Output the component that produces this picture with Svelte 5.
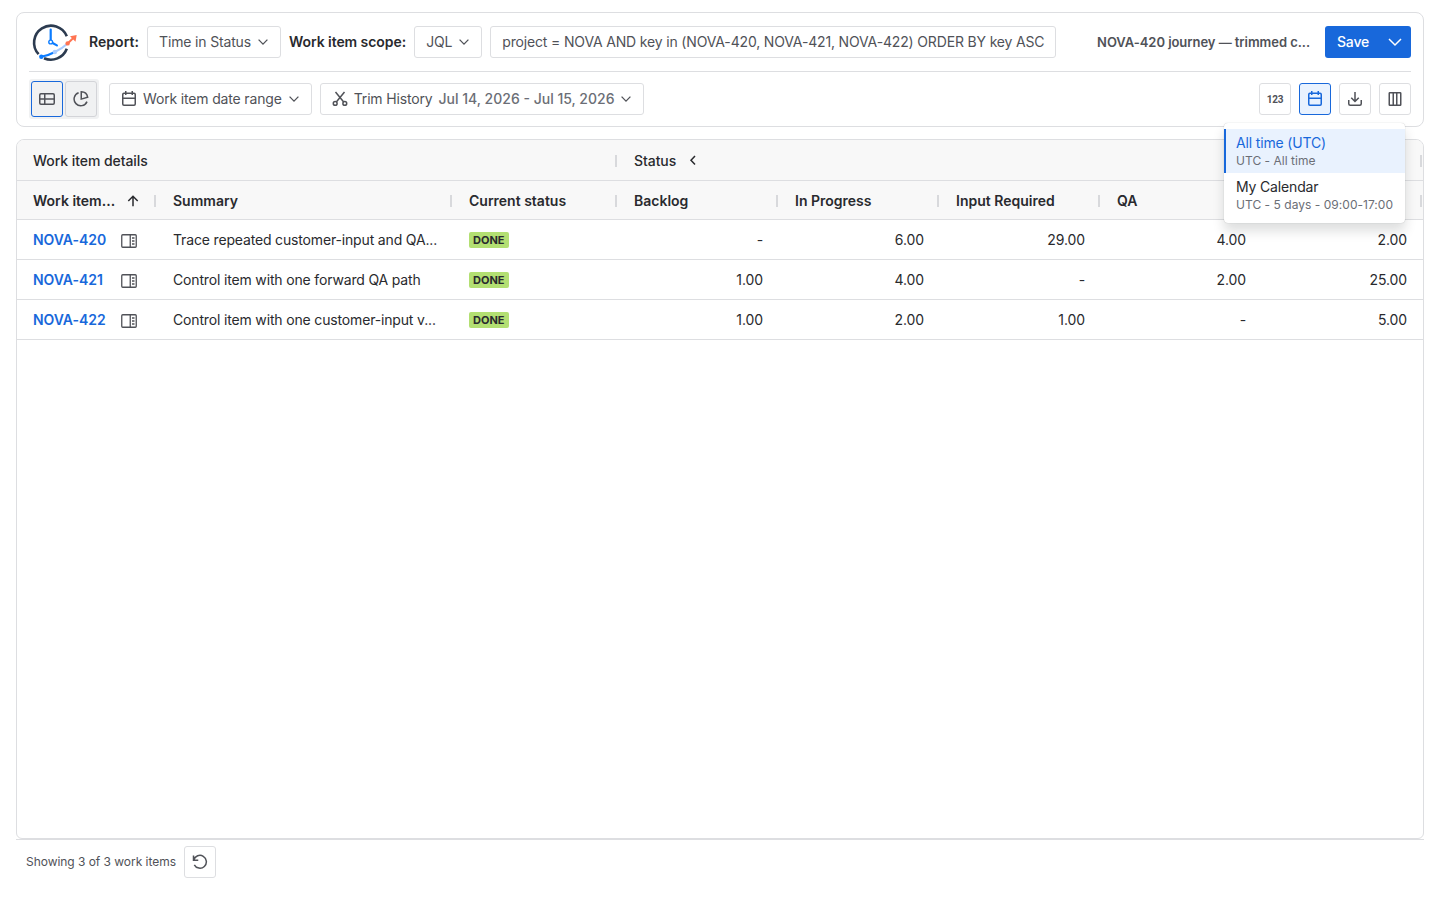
<script>
  let selectedCalendar = $state('all');
  let view = $state('table');

  const calendars = [
    { id: 'all', name: 'All time (UTC)', detail: 'UTC - All time' },
    { id: 'mine', name: 'My Calendar', detail: 'UTC - 5 days - 09:00-17:00' }
  ];

  const statuses = ['Backlog', 'In Progress', 'Input Required', 'QA', ''];

  const items = [
    {
      key: 'NOVA-420',
      summary: 'Trace repeated customer-input and QA...',
      times: ['-', '6.00', '29.00', '4.00', '2.00']
    },
    {
      key: 'NOVA-421',
      summary: 'Control item with one forward QA path',
      times: ['1.00', '4.00', '-', '2.00', '25.00']
    },
    {
      key: 'NOVA-422',
      summary: 'Control item with one customer-input v...',
      times: ['1.00', '2.00', '1.00', '-', '5.00']
    }
  ];
</script>

{#snippet chevron()}
  <svg class="chevron" width="12" height="12" viewBox="0 0 12 12"><path d="M1.6 3.6 6 8.1l4.4-4.5" /></svg>
{/snippet}

{#snippet calendarIcon()}
  <svg width="16" height="16" viewBox="0 0 16 16">
    <rect x="1.75" y="2.25" width="12.5" height="12" rx="1.2" />
    <path d="M1.75 7.25h12.5M4.75 0v4M11.25 0v4" />
  </svg>
{/snippet}

<main>
  <header class="toolbar">
    <div class="bar top">
      <svg class="logo" width="52" height="40" viewBox="0 0 52 40">
        <path class="ring" d="M37.8 14.2A17 17 0 1 0 9.6 32.2" />
        <path class="ring" d="M15 36.2A17 17 0 0 0 37.8 26.8" />
        <path class="hand" d="M21.7 7.6v10.6M23.1 20.7l4.8 2.7" />
        <circle class="hub" cx="21.7" cy="20" r="1.9" />
        <path class="trend-start" d="M12.3 34.7Q19.5 33.5 25.9 30" />
        <path class="trend-mid" d="M25.9 30Q33 26.5 38.6 21.4" />
        <path class="trend-end" d="M38.6 21.4l6-5.6" />
        <path class="arrow" d="M41 14.3l6.700-1.200-1.200 6.600z" />
        <circle cx="12.3" cy="34.7" r="2.2" fill="#0c7cff" />
        <circle cx="25.9" cy="30" r="2.2" fill="#a9ccff" />
        <circle cx="38.6" cy="21.4" r="2.2" fill="#ff7452" />
      </svg>
      <strong>Report:</strong>
      <button class="btn">Time in Status {@render chevron()}</button>
      <strong>Work item scope:</strong>
      <button class="btn">JQL {@render chevron()}</button>
      <div class="btn query">project = NOVA AND key in (NOVA-420, NOVA-421, NOVA-422) ORDER BY key ASC</div>
      <span class="report-name">NOVA-420 journey — trimmed c...</span>
      <div class="save">
        <button class="save-main">Save</button>
        <button class="save-more" aria-label="More save options">
          <svg width="16" height="16" viewBox="0 0 16 16"><path d="M2 5l6 6 6-6" /></svg>
        </button>
      </div>
    </div>

    <div class="bar filters">
      <div class="views">
        <button class:active={view === 'table'} onclick={() => (view = 'table')} aria-label="Table">
          <svg width="16" height="16" viewBox="0 0 16 16">
            <rect x=".75" y="2.75" width="14.5" height="10.5" rx="1.2" />
            <path d="M.75 8h14.5M5.75 2.75v10.5" />
          </svg>
        </button>
        <button class:active={view === 'chart'} onclick={() => (view = 'chart')} aria-label="Chart">
          <svg width="16" height="16" viewBox="0 0 16 16">
            <path d="M5.6 1.7A6.7 6.7 0 1 0 14 10.6" />
            <path d="M8.25.75A6.7 6.7 0 0 1 14.7 6.3L8.25 8.1z" />
          </svg>
        </button>
      </div>
      <button class="btn">
        {@render calendarIcon()}
        Work item date range {@render chevron()}
      </button>
      <button class="btn">
        <svg width="16" height="16" viewBox="0 0 16 16">
          <circle cx="3.2" cy="12.4" r="1.9" />
          <circle cx="12.8" cy="12.4" r="1.9" />
          <path d="M3.5 1 11.7 10.9M12.5 1 4.3 10.9" />
        </svg>
        Trim History <span class="range">Jul 14, 2026 - Jul 15, 2026</span> {@render chevron()}
      </button>

      <div class="actions">
        <button class="btn square" aria-label="Number format">
          <span class="digits">123</span>
        </button>
        <div class="calendar-picker">
          <button class="btn square pressed" aria-label="Calendar">{@render calendarIcon()}</button>
          <div class="menu">
            {#each calendars as calendar}
              <button
                class="option"
                class:selected={selectedCalendar === calendar.id}
                onclick={() => (selectedCalendar = calendar.id)}
              >
                <span class="option-name">{calendar.name}</span>
                <span class="option-detail">{calendar.detail}</span>
              </button>
            {/each}
          </div>
        </div>
        <button class="btn square" aria-label="Export">
          <svg width="16" height="16" viewBox="0 0 16 16">
            <path d="M1.75 9v3.75a1.5 1.5 0 0 0 1.5 1.5h9.5a1.5 1.5 0 0 0 1.5-1.5V9M8 1v9.5M4.25 6.75 8 10.5l3.75-3.75" />
          </svg>
        </button>
        <button class="btn square" aria-label="Columns">
          <svg width="16" height="16" viewBox="0 0 16 16">
            <rect x="2.25" y="1.75" width="11.5" height="12.5" rx=".6" />
            <path d="M6.25 1.75v12.5M9.75 1.75v12.5" />
          </svg>
        </button>
      </div>
    </div>
  </header>

  <section class="grid">
    <div class="row groups">
      <div class="cell head details">Work item details</div>
      <div class="cell head status-group">
        Status
        <svg width="12" height="12" viewBox="0 0 12 12"><path d="M8 1 4 5.3l4 4.300" /></svg>
      </div>
    </div>
    <div class="row columns">
      <div class="cell head">
        Work item...
        <svg class="sort" width="12" height="12" viewBox="0 0 12 12"><path d="M6 11.3V1.5M1.3 6 6 1.3 10.7 6" /></svg>
      </div>
      <div class="cell head">Summary</div>
      <div class="cell head">Current status</div>
      {#each statuses as status}
        <div class="cell head">{status}</div>
      {/each}
    </div>
    {#each items as item}
      <div class="row">
        <div class="cell key">
          <a href="#{item.key}">{item.key}</a>
          <svg width="16" height="16" viewBox="0 0 16 16">
            <rect x=".75" y="1.75" width="14.5" height="12.5" rx="1" />
            <path d="M9.25 1.75v12.5" />
            <path d="M11 5h2.5M11 8h2.5M11 11h2.5" />
          </svg>
        </div>
        <div class="cell">{item.summary}</div>
        <div class="cell"><span class="lozenge">DONE</span></div>
        {#each item.times as time}
          <div class="cell number">{time}</div>
        {/each}
      </div>
    {/each}
  </section>

  <footer>
    <span>Showing 3 of 3 work items</span>
    <button class="btn square" aria-label="Refresh">
      <svg width="16" height="16" viewBox="0 0 16 16">
        <path d="M1.5 1.5v4.75h4.75M1.8 6A6.4 6.4 0 1 1 2.3 10.8" />
      </svg>
    </button>
  </footer>
</main>

<style>
  :global(body) {
    background: #fff;
  }

  main {
    box-sizing: border-box;
    height: 900px;
    padding: 12px 16px 0;
    display: flex;
    flex-direction: column;
    font: 14px/20px Inter, sans-serif;
    letter-spacing: -0.16px;
    color: #292a2e;
    overflow: hidden;
  }

  button {
    font: inherit;
    letter-spacing: inherit;
    color: inherit;
    margin: 0;
    cursor: pointer;
  }

  svg {
    display: block;
    flex: none;
    fill: none;
    stroke: currentColor;
    stroke-width: 1.5;
  }

  .toolbar {
    box-sizing: border-box;
    height: 115px;
    flex: none;
    padding: 0 12px;
    border: 1px solid #dddee1;
    border-radius: 8px;
  }

  .bar {
    display: flex;
    align-items: center;
    gap: 8px;
    white-space: nowrap;
  }

  .top {
    height: 58px;
    border-bottom: 1px solid #dddee1;
  }

  .filters {
    height: 54px;
  }

  strong {
    font-weight: 600;
    letter-spacing: -0.06px;
  }

  .logo + strong {
    letter-spacing: 0.05px;
  }

  .btn {
    box-sizing: border-box;
    height: 32px;
    display: flex;
    align-items: center;
    gap: 6px;
    padding: 0 11px;
    border: 1px solid #dddee1;
    border-radius: 3px;
    background: #fff;
    color: #505258;
  }

  .range {
    color: #6b6e76;
    font-weight: 500;
    letter-spacing: 0;
  }

  .chevron {
    stroke-width: 1.3;
  }

  .square {
    width: 32px;
    padding: 0;
    justify-content: center;
  }

  .digits {
    font: 700 10px/16px Roboto, sans-serif;
    letter-spacing: -0.3px;
    padding-top: 1px;
  }

  .pressed {
    border-color: #1868db;
    background: #e9f2fe;
    color: #1868db;
  }

  .logo .ring {
    stroke: #2c3b50;
    stroke-width: 2.6;
  }

  .logo .hand {
    stroke: #0c7cff;
    stroke-width: 2.2;
    stroke-linecap: round;
  }

  .logo circle {
    stroke: none;
  }

  .logo .hub {
    stroke: #0c7cff;
    stroke-width: 1.4;
    fill: #fff;
  }

  .trend-start {
    stroke: #0c7cff;
    stroke-width: 2;
  }

  .trend-mid {
    stroke: #a9ccff;
    stroke-width: 2;
  }

  .trend-end {
    stroke: #ff7452;
    stroke-width: 2;
  }

  .arrow {
    fill: #ff7452;
    stroke: none;
  }

  .report-name {
    margin-left: auto;
    margin-right: 7px;
    font-size: 13px;
    font-weight: 600;
    letter-spacing: -0.05px;
    color: #505258;
  }

  .save {
    display: flex;
    height: 32px;
    border-radius: 3px;
    overflow: hidden;
    background: #1868db;
    color: #fff;
  }

  .save button {
    border: 0;
    background: none;
    font-weight: 500;
  }

  .save-main {
    width: 54px;
    padding: 0 0 0 2px;
  }

  .save-more {
    width: 32px;
    padding: 0 8px;
  }

  .views {
    display: flex;
    gap: 2px;
    padding: 2px;
    margin-right: 2px;
    border-radius: 3px;
    background: #f0f1f2;
  }

  .views button {
    box-sizing: border-box;
    width: 32px;
    height: 36px;
    padding: 0 7px;
    border: 1px solid #d3d4d8;
    border-radius: 3px;
    background: #f0f1f2;
    color: #505258;
  }

  .views .active {
    border-color: #1868db;
  }

  .actions {
    display: flex;
    gap: 8px;
    margin-left: auto;
  }

  .calendar-picker {
    position: relative;
  }

  .menu {
    position: absolute;
    top: 40px;
    right: -74px;
    z-index: 2;
    box-sizing: border-box;
    width: 181px;
    padding: 6px 0;
    border-radius: 4px;
    background: #fff;
    box-shadow: 0 8px 12px rgba(30, 31, 33, 0.15), 0 0 1px rgba(30, 31, 33, 0.31);
  }

  .option {
    display: flex;
    flex-direction: column;
    box-sizing: border-box;
    width: 100%;
    height: 44px;
    padding: 4px 10px;
    border: 0;
    border-left: 2px solid transparent;
    background: none;
    text-align: left;
    white-space: nowrap;
  }

  .option.selected {
    border-left-color: #1868db;
    background: #e9f2fe;
  }

  .selected .option-name {
    color: #1868db;
  }

  .option-detail {
    font-size: 12px;
    line-height: 16px;
    letter-spacing: 0.03px;
    color: #6b6e76;
  }

  .grid {
    box-sizing: border-box;
    height: 700px;
    flex: none;
    margin-top: 12px;
    border: 1px solid #dddee1;
    border-radius: 8px 8px 6px 6px;
    overflow: hidden;
  }

  .row {
    box-sizing: border-box;
    height: 40px;
    display: grid;
    grid-template-columns: 140px 296px 165px repeat(5, 161px);
    border-bottom: 1px solid #dddee1;
  }

  .groups {
    height: 41px;
    background: #f8f8f8;
  }

  .columns {
    height: 39px;
    background: #f8f8f8;
    font-weight: 600;
  }

  .details {
    grid-column: span 3;
  }

  .status-group {
    grid-column: span 5;
  }

  .cell {
    display: flex;
    align-items: center;
    min-width: 0;
    padding: 0 16px;
    white-space: nowrap;
  }

  .head {
    padding: 2px 1px 0 16px;
    letter-spacing: 0;
  }

  .head::after {
    content: '';
    width: 2px;
    height: 12px;
    margin-left: auto;
    background: #d8d9dc;
  }

  .groups .head {
    gap: 11px;
    padding-top: 1px;
    font-weight: 500;
    letter-spacing: -0.06px;
  }

  .sort {
    margin-left: 12px;
  }

  .key a {
    width: 88px;
    color: #1868db;
    font-weight: 600;
    letter-spacing: -0.05px;
    text-decoration: none;
  }

  .key svg {
    stroke-width: 1.3;
    color: #505258;
    margin-top: 2px;
  }

  .lozenge {
    height: 16px;
    padding: 0 4px;
    border-radius: 2px;
    background: #b3df72;
    font-size: 11px;
    line-height: 16px;
    font-weight: 700;
    letter-spacing: 0;
  }

  .number {
    justify-content: flex-end;
    letter-spacing: -0.1px;
  }

  footer {
    display: flex;
    align-items: center;
    gap: 8px;
    padding: 6px 10px;
    border-top: 1px solid #dddee1;
    font-size: 12px;
    letter-spacing: -0.04px;
    color: #505258;
  }
</style>
